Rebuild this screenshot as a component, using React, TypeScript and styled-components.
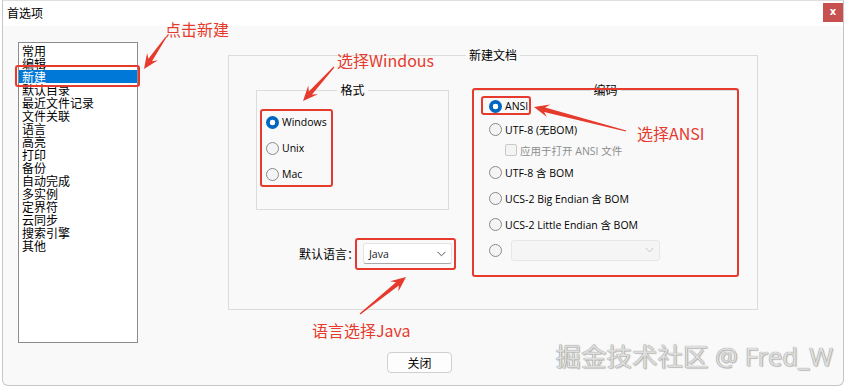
import React from "react";
import styled, { createGlobalStyle, css } from "styled-components";

const RED = "#e63a2d";
const UI_FONT = `"Open Sans", "Noto Sans CJK SC", sans-serif`;
const CJK_FONT = `"Noto Sans CJK SC", "Noto Sans", sans-serif`;

const GlobalStyle = createGlobalStyle`
  html, body {
    margin: 0;
    padding: 0;
    background: #ffffff;
  }
  body {
    font-family: ${CJK_FONT};
    color: #000;
  }
  * {
    box-sizing: border-box;
  }
`;

const Page = styled.div`
  position: relative;
  width: 846px;
  height: 387px;
  overflow: hidden;
`;

const Window = styled.div`
  margin-left: 2px;
  width: 842px;
  height: 386px;
  border: 1px solid #c6c6c6;
  border-top-color: #dedede;
  border-radius: 0 0 6px 6px;
  display: flex;
  flex-direction: column;
  overflow: hidden;
  background: #f9f9f9;
`;

const TitleBar = styled.div`
  height: 25px;
  flex: none;
  display: flex;
  align-items: flex-start;
  justify-content: space-between;
  background: #ffffff;
`;

const Title = styled.div`
  padding: 4px 0 0 4px;
  font-size: 12px;
  line-height: 16px;
`;

const CloseX = styled.div`
  margin-top: 2px;
  width: 20px;
  height: 19px;
  background: #c75050;
  color: #fff;
  font-family: "DejaVu Sans", sans-serif;
  font-size: 10px;
  font-weight: bold;
  line-height: 18px;
  text-align: center;
`;

const Body = styled.div`
  flex: 1;
  display: flex;
  align-items: flex-start;
  padding: 16px 0 0 15px;
`;

const ListBox = styled.div`
  width: 120px;
  height: 301px;
  flex: none;
  border: 1px solid #8c8c8c;
  background: #ffffff;
  padding-top: 1px;
  display: flex;
  flex-direction: column;
`;

const ListItem = styled.div<{ selected?: boolean }>`
  height: 13px;
  padding-left: 3px;
  font-size: 12px;
  line-height: 13px;
  white-space: nowrap;
  ${p =>
    p.selected &&
    css`
      background: #0078d7;
      color: #ffffff;
    `}
`;

/* red annotation frame drawn over a control */
const Marked = styled.div<{ t: number; r: number; b: number; l: number }>`
  position: relative;
  &::after {
    content: "";
    position: absolute;
    top: ${p => -p.t}px;
    right: ${p => -p.r}px;
    bottom: ${p => -p.b}px;
    left: ${p => -p.l}px;
    border: 2.5px solid ${RED};
    border-radius: 3px;
    pointer-events: none;
  }
`;

const RightColumn = styled.div`
  margin-left: 90px;
  width: 530px;
  display: flex;
  flex-direction: column;
`;

const Group = styled.fieldset<{ w: number; h: number }>`
  margin: 0;
  min-width: 0;
  width: ${p => p.w}px;
  height: ${p => p.h}px;
  border: 1px solid #dcdcdc;
  padding: 0;
`;

const Legend = styled.legend`
  margin: 0 auto;
  padding: 0 3px;
  font-size: 12px;
  line-height: 16px;
`;

const OuterGroup = styled(Group)`
  margin-top: 5px;
`;

const Columns = styled.div`
  display: flex;
  align-items: flex-start;
  margin: 19px 0 0 27px;
`;

const LeftSide = styled.div`
  display: flex;
  flex-direction: column;
`;

const RadioStack = styled.div`
  width: fit-content;
  margin: 11px 0 0 9px;
  display: flex;
  flex-direction: column;
`;

const RadioRow = styled.div<{ gap?: number; h?: number; indent?: number }>`
  display: flex;
  align-items: center;
  height: ${p => p.h ?? 16}px;
  margin-top: ${p => p.gap ?? 0}px;
  padding-left: ${p => p.indent ?? 0}px;
  font-family: ${UI_FONT};
  font-size: 10.5px;
  white-space: nowrap;
`;

const FormatRow = styled(RadioRow)`
  height: 26px;
`;

const Inline = styled.div`
  display: flex;
  align-items: center;
`;

const Radio = styled.span<{ checked?: boolean }>`
  width: 13px;
  height: 13px;
  flex: none;
  border-radius: 50%;
  margin-right: 3px;
  ${p =>
    p.checked
      ? css`
          background: radial-gradient(circle, #ffffff 0 2.6px, #0067c0 3.1px);
        `
      : css`
          border: 1px solid #8a8a8a;
          background: #f4f4f4;
        `}
`;

const CheckBox = styled.span`
  width: 12px;
  height: 12px;
  flex: none;
  border: 1px solid #c9c9c9;
  border-radius: 2px;
  background: #f4f4f4;
  margin-right: 3px;
`;

const Muted = styled.span`
  color: #8d8d8d;
`;

const LangRow = styled.div`
  display: flex;
  align-items: center;
  margin: 33px 0 0 43px;
`;

const LangLabel = styled.span`
  font-size: 12px;
  line-height: 16px;
  margin-right: 4px;
`;

const Combo = styled.div<{ disabled?: boolean; w: number }>`
  width: ${p => p.w}px;
  height: 21px;
  display: flex;
  align-items: center;
  justify-content: space-between;
  padding: 0 5px;
  border-radius: 3px;
  font-family: ${UI_FONT};
  font-size: 10.5px;
  ${p =>
    p.disabled
      ? css`
          background: #f5f5f5;
          border: 1px solid #e6e6e6;
          color: #bbbbbb;
        `
      : css`
          background: #ffffff;
          border: 1px solid #e3e3e3;
          border-bottom-color: #a8a8a8;
          color: #1a1a1a;
        `}
`;

const EncodingMark = styled(Marked)`
  margin-left: 21px;
`;

const EncodingList = styled.div`
  display: flex;
  flex-direction: column;
  padding-left: 15px;
`;

const DisabledCombo = styled(Combo)`
  margin-left: 6px;
`;

const CloseButton = styled.button`
  margin: 42px 0 0 159px;
  width: 65px;
  height: 21px;
  padding: 0;
  border: 1px solid #d0d0d0;
  border-radius: 4px;
  background: #fdfdfd;
  font-family: ${CJK_FONT};
  font-size: 12px;
  line-height: 18px;
  color: #000;
`;

const Note = styled.div<{ x: number; y: number }>`
  position: absolute;
  left: ${p => p.x}px;
  top: ${p => p.y}px;
  color: ${RED};
  font-family: ${CJK_FONT};
  font-size: 16px;
  line-height: 16px;
  white-space: nowrap;
`;

const Watermark = styled.div`
  position: absolute;
  right: 13px;
  top: 341px;
  font-family: "Noto Sans", "Noto Sans CJK SC", sans-serif;
  font-size: 25.5px;
  line-height: 30px;
  color: #dedede;
  text-shadow: 0 0 1px #6a6a6a, 1px 1px 1px rgba(0, 0, 0, 0.2);
  white-space: nowrap;
`;

const ArrowLayer = styled.svg`
  position: absolute;
  left: 0;
  top: 0;
  pointer-events: none;
`;

const Chevron = ({ color }: { color: string }) => (
  <svg width="9" height="6" viewBox="0 0 9 6">
    <path d="M0.5 0.8 L4.5 4.8 L8.5 0.8" fill="none" stroke={color} strokeWidth="1" />
  </svg>
);

const arrowPoints = (tx: number, ty: number, px: number, py: number) => {
  const dx = px - tx;
  const dy = py - ty;
  const len = Math.hypot(dx, dy);
  const ux = dx / len;
  const uy = dy / len;
  const nx = -uy;
  const ny = ux;
  const L = 13;
  const W = 6.5;
  const bx = px - ux * L;
  const by = py - uy * L;
  const pts = [
    [tx + nx * 0.6, ty + ny * 0.6],
    [bx + nx * 2.2 + ux * 2, by + ny * 2.2 + uy * 2],
    [bx + nx * W - ux * 2, by + ny * W - uy * 2],
    [px, py],
    [bx - nx * W - ux * 2, by - ny * W - uy * 2],
    [bx - nx * 2.2 + ux * 2, by - ny * 2.2 + uy * 2],
    [tx - nx * 0.6, ty - ny * 0.6],
  ];
  return pts.map(p => p.map(v => v.toFixed(1)).join(",")).join(" ");
};

const arrows: [number, number, number, number][] = [
  [166, 37, 144, 69],
  [334, 67, 303, 101],
  [626, 131, 534, 107],
  [360, 314, 406, 277],
];

const menu = [
  "常用",
  "编辑",
  "新建",
  "默认目录",
  "最近文件记录",
  "文件关联",
  "语言",
  "高亮",
  "打印",
  "备份",
  "自动完成",
  "多实例",
  "定界符",
  "云同步",
  "搜索引擎",
  "其他",
];

export default function App() {
  return (
    <Page>
      <GlobalStyle />
      <Window>
        <TitleBar>
          <Title>首选项</Title>
          <CloseX>x</CloseX>
        </TitleBar>
        <Body>
          <ListBox>
            {menu.map(item =>
              item === "新建" ? (
                <Marked key={item} t={5} r={3} b={4} l={4}>
                  <ListItem selected>{item}</ListItem>
                </Marked>
              ) : (
                <ListItem key={item}>{item}</ListItem>
              )
            )}
          </ListBox>
          <RightColumn>
            <OuterGroup w={530} h={263}>
              <Legend>新建文档</Legend>
              <Columns>
                <LeftSide>
                  <Group w={193} h={128}>
                    <Legend>格式</Legend>
                    <Marked t={0} r={6} b={0} l={6} as={RadioStack}>
                      <FormatRow>
                        <Radio checked />
                        Windows
                      </FormatRow>
                      <FormatRow>
                        <Radio />
                        Unix
                      </FormatRow>
                      <FormatRow>
                        <Radio />
                        Mac
                      </FormatRow>
                    </Marked>
                  </Group>
                  <LangRow>
                    <LangLabel>默认语言：</LangLabel>
                    <Marked t={5} r={4} b={6} l={8}>
                      <Combo w={89}>
                        Java
                        <Chevron color="#555" />
                      </Combo>
                    </Marked>
                  </LangRow>
                </LeftSide>
                <EncodingMark t={-6} r={1} b={1} l={1}>
                  <Group w={265} h={194}>
                    <Legend>编码</Legend>
                    <EncodingList>
                      <RadioRow>
                        <Marked t={3} r={3} b={2} l={8}>
                          <Inline>
                            <Radio checked />
                            ANSI
                          </Inline>
                        </Marked>
                      </RadioRow>
                      <RadioRow gap={7}>
                        <Radio />
                        UTF-8 (无BOM)
                      </RadioRow>
                      <RadioRow gap={5} indent={16}>
                        <CheckBox />
                        <Muted>应用于打开 ANSI 文件</Muted>
                      </RadioRow>
                      <RadioRow gap={6}>
                        <Radio />
                        UTF-8 含 BOM
                      </RadioRow>
                      <RadioRow gap={10}>
                        <Radio />
                        UCS-2 Big Endian 含 BOM
                      </RadioRow>
                      <RadioRow gap={10}>
                        <Radio />
                        UCS-2 Little Endian 含 BOM
                      </RadioRow>
                      <RadioRow gap={7} h={22}>
                        <Radio />
                        <DisabledCombo disabled w={149}>
                          <span />
                          <Chevron color="#c4c4c4" />
                        </DisabledCombo>
                      </RadioRow>
                    </EncodingList>
                  </Group>
                </EncodingMark>
              </Columns>
            </OuterGroup>
            <CloseButton>关闭</CloseButton>
          </RightColumn>
        </Body>
      </Window>

      <ArrowLayer width="846" height="387" viewBox="0 0 846 387">
        {arrows.map((a, i) => (
          <polygon key={i} points={arrowPoints(...a)} fill={RED} />
        ))}
      </ArrowLayer>
      <Note x={165} y={21}>点击新建</Note>
      <Note x={337} y={52}>选择Windous</Note>
      <Note x={637} y={125}>选择ANSI</Note>
      <Note x={312} y={322}>语言选择Java</Note>
      <Watermark>掘金技术社区 @ Fred_W</Watermark>
    </Page>
  );
}
